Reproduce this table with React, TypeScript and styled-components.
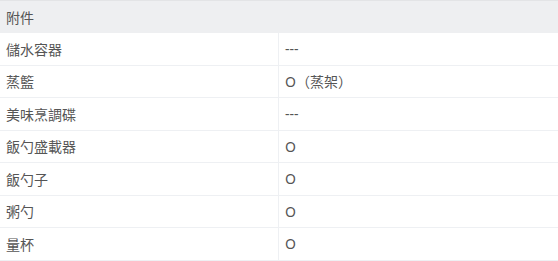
import React from "react";
import styled, { createGlobalStyle } from "styled-components";

const Global = createGlobalStyle`
  html, body { margin: 0; padding: 0; background: #ffffff; }
  body { font-family: "Noto Sans", "Noto Sans CJK TC", sans-serif; }
`;

const Table = styled.div`
  width: 558px;
  border-top: 1px solid #e3e4e6;
  display: flex;
  flex-direction: column;
`;

const Header = styled.div`
  height: 32px;
  background: #eeeff1;
  display: flex;
  align-items: center;
  padding: 0 6px;
  font-size: 14px;
  color: #555555;
`;

const Row = styled.div`
  display: grid;
  grid-template-columns: 279px 1fr;
  border-bottom: 1px solid #eef0f3;
`;

const Cell = styled.div<{ $divider?: boolean }>`
  height: 31.5px;
  display: flex;
  align-items: center;
  padding: 0 6px;
  font-size: 14px;
  color: #555555;
  border-right: ${(p) => (p.$divider ? "1px solid #eef0f3" : "none")};
`;

const rows: [string, string][] = [
  ["儲水容器", "---"],
  ["蒸籃", "O（蒸架）"],
  ["美味烹調碟", "---"],
  ["飯勺盛載器", "O"],
  ["飯勺子", "O"],
  ["粥勺", "O"],
  ["量杯", "O"],
];

export default function App() {
  return (
    <>
      <Global />
      <Table>
        <Header>附件</Header>
        {rows.map(([k, v]) => (
          <Row key={k}>
            <Cell $divider>{k}</Cell>
            <Cell>{v}</Cell>
          </Row>
        ))}
      </Table>
    </>
  );
}
